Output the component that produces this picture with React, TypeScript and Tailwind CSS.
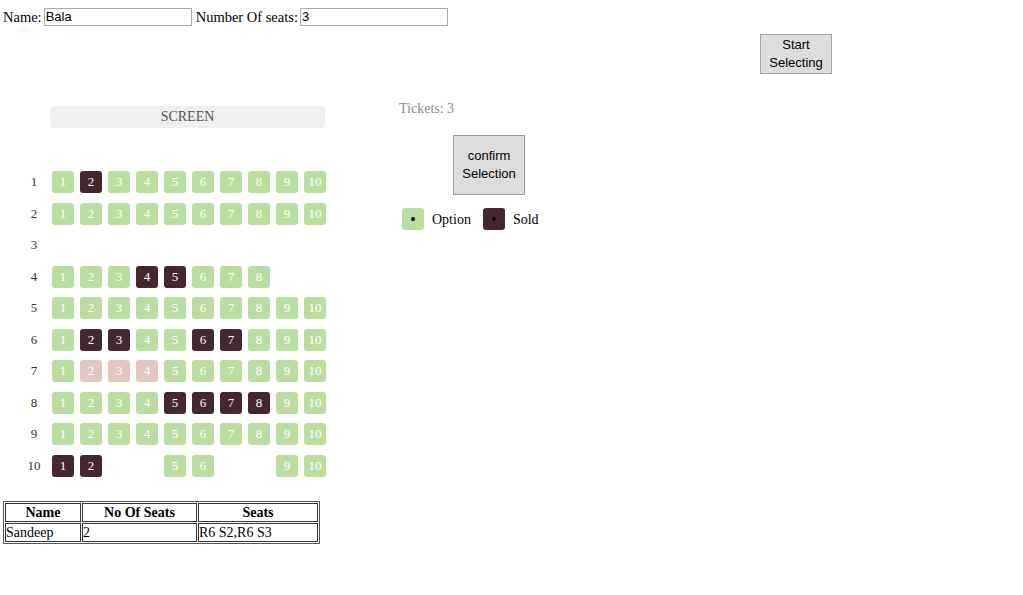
import React from 'react';

type SeatState = 'open' | 'sold' | 'held' | 'none';

const sold: Record<number, number[]> = {
  1: [2],
  4: [4, 5],
  6: [2, 3, 6, 7],
  8: [5, 6, 7, 8],
  10: [1, 2],
};
const held: Record<number, number[]> = { 7: [2, 3, 4] };
const missing: Record<number, number[]> = {
  3: [1, 2, 3, 4, 5, 6, 7, 8, 9, 10],
  4: [9, 10],
  10: [3, 4, 7, 8],
};

const seatState = (row: number, seat: number): SeatState => {
  if (missing[row]?.includes(seat)) return 'none';
  if (sold[row]?.includes(seat)) return 'sold';
  if (held[row]?.includes(seat)) return 'held';
  return 'open';
};

const Seat: React.FC<{ state: SeatState; n: number }> = ({ state, n }) => {
  if (state === 'none') return <div className="w-[22px] h-[22px] shrink-0" />;
  const bg =
    state === 'sold' ? 'bg-[#44272f]' : state === 'held' ? 'bg-[#e4c6c1]' : 'bg-[#b9dea0]';
  return (
    <div
      className={`w-[22px] h-[22px] shrink-0 rounded-[3px] ${bg} text-white text-[13px] leading-[22px] text-center`}
    >
      {n}
    </div>
  );
};

const App: React.FC = () => {
  const rows = Array.from({ length: 10 }, (_, i) => i + 1);
  const seats = Array.from({ length: 10 }, (_, i) => i + 1);

  return (
    <div className="w-[1023px] h-[595px] bg-white text-black font-['Liberation_Serif',serif]">
      {/* Top form */}
      <div className="flex items-center pl-[3px] pt-[8px] text-[14.5px] leading-[18px]">
        <span>Name:</span>
        <input
          defaultValue="Bala"
          className="ml-[2px] w-[148px] h-[18px] border border-[#a9a9a9] px-[1px] text-[13px] font-['Liberation_Sans',sans-serif] outline-none"
        />
        <span className="ml-[4px]">Number Of seats:</span>
        <input
          defaultValue="3"
          className="ml-[2px] w-[148px] h-[18px] border border-[#a9a9a9] px-[1px] text-[13px] font-['Liberation_Sans',sans-serif] outline-none"
        />
      </div>

      <button className="mt-[8px] ml-[760px] w-[72px] h-[40px] bg-[#dddddd] border border-[#a3a3a3] text-[13px] leading-[18px] font-['Liberation_Sans',sans-serif] text-black">
        Start
        <br />
        Selecting
      </button>

      {/* Main */}
      <div className="flex mt-[27px]">
        <div className="w-[399px] shrink-0">
          <div className="mt-[5px] ml-[50px] w-[275px] h-[22px] rounded-[4px] bg-[#efefef] text-[#555] text-[14px] leading-[22px] text-center">
            SCREEN
          </div>

          <div className="mt-[43px]">
            {rows.map((r) => (
              <div key={r} className="flex h-[31.5px]">
                <div className="ml-[24px] w-[20px] mr-[8px] text-center text-[13px] leading-[21px] text-[#333]">
                  {r}
                </div>
                <div className="flex gap-[6px]">
                  {seats.map((s) => (
                    <Seat key={s} state={seatState(r, s)} n={s} />
                  ))}
                </div>
              </div>
            ))}
          </div>
        </div>

        <div className="flex flex-col">
          <div className="text-[14px] leading-[16px] text-[#8a8a8a]">Tickets: 3</div>
          <button className="mt-[18px] ml-[54px] w-[72px] h-[60px] bg-[#dddddd] border border-[#9c9c9c] text-[13px] leading-[18px] font-['Liberation_Sans',sans-serif] text-black">
            confirm
            <br />
            Selection
          </button>
          <div className="flex items-center mt-[13px] ml-[3px] text-[14px]">
            <div className="w-[22px] h-[22px] rounded-[3px] bg-[#b9dea0] flex items-center justify-center">
              <div className="w-[4px] h-[4px] rounded-full bg-black" />
            </div>
            <span className="ml-[8px]">Option</span>
            <div className="ml-[12px] w-[22px] h-[22px] rounded-[3px] bg-[#44272f] flex items-center justify-center">
              <div className="w-[4px] h-[4px] rounded-full bg-black" />
            </div>
            <span className="ml-[8px]">Sold</span>
          </div>
        </div>
      </div>

      {/* Bookings table */}
      <table className="mt-[15px] ml-[3px] w-[317px] border border-[#555] border-separate border-spacing-[1px] text-[14px] leading-[17px]">
        <thead>
          <tr>
            <th className="w-[76px] border border-[#333] font-bold">Name</th>
            <th className="w-[115px] border border-[#333] font-bold">No Of Seats</th>
            <th className="border border-[#333] font-bold">Seats</th>
          </tr>
        </thead>
        <tbody>
          <tr>
            <td className="border border-[#333] text-left">Sandeep</td>
            <td className="border border-[#333] text-left">2</td>
            <td className="border border-[#333] text-left">R6 S2,R6 S3</td>
          </tr>
        </tbody>
      </table>
    </div>
  );
};

export default App;
